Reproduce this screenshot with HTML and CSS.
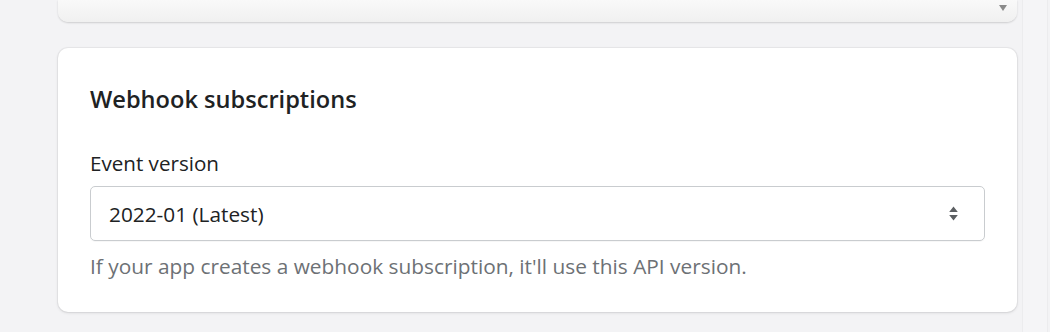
FILE: index.html
```html
<!DOCTYPE html>
<html>
<head>
<meta charset="utf-8">
<link rel="stylesheet" href="styles.css">
</head>
<body>
<div class="layout">
  <div class="page">
    <div class="prev-card">
      <span class="scroll-arrow"></span>
    </div>
    <section class="card">
      <h2 class="card-title">Webhook subscriptions</h2>
      <div class="field">
        <label class="label">Event version</label>
        <div class="select">
          <span class="select-value">2022-01 (Latest)</span>
          <svg class="select-icon" width="9" height="15" viewBox="0 0 9 15"><path d="M4.5 0.5 L8.8 6 H0.2 Z M4.5 14.5 L8.8 9 H0.2 Z" fill="#5c5f62"/></svg>
        </div>
        <p class="help">If your app creates a webhook subscription, it'll use this API version.</p>
      </div>
    </section>
  </div>
  <div class="rail"></div>
</div>
</body>
</html>
```

FILE: styles.css
```css
* { box-sizing: border-box; }
html, body { margin: 0; padding: 0; }
body {
  background: #f3f3f5;
  font-family: "Open Sans", "Noto Sans", sans-serif;
  color: #202223;
  width: 1050px;
  height: 332px;
  overflow: hidden;
}
.layout {
  display: flex;
  height: 332px;
}
.page {
  width: 1022px;
  display: flex;
  flex-direction: column;
  gap: 26px;
  padding: 0 5px 0 58px;
}
.rail {
  width: 26px;
  border-left: 1px solid #ececee;
  border-right: 1px solid #ececee;
  background: #f5f5f7;
}
.prev-card {
  height: 22px;
  border-radius: 0 0 10px 10px;
  background: linear-gradient(#f9f9f9, #f0f0f0);
  box-shadow: 0 1px 2px rgba(0,0,0,0.16);
  position: relative;
}
.scroll-arrow {
  position: absolute;
  right: 10px;
  top: 5px;
  width: 0; height: 0;
  border-left: 4px solid transparent;
  border-right: 4px solid transparent;
  border-top: 6px solid #8a8a8a;
}
.card {
  background: #ffffff;
  border-radius: 10px;
  box-shadow: 0 0 0 1px rgba(63,63,68,0.05), 0 1px 3px rgba(63,63,68,0.15);
  padding: 31px 32px 30px 32px;
  height: 264px;
}
.card-title {
  margin: 0;
  font-size: 23.6px;
  font-weight: 600;
  line-height: 40px;
}
.field { margin-top: 30px; }
.label {
  display: block;
  font-size: 20.6px;
  line-height: 28px;
}
.select {
  margin-top: 9px;
  height: 55px;
  border: 1px solid #c9cccf;
  border-radius: 5px;
  display: flex;
  align-items: center;
  justify-content: space-between;
  padding: 0 26px 0 18px;
  box-shadow: 0 1px 0 rgba(0,0,0,0.03);
}
.select-value {
  font-size: 20.8px;
}
.select-icon { display: block; }
.help {
  margin: 11px 0 0;
  font-size: 20.85px;
  line-height: 28px;
  color: #6d7175;
}
```
